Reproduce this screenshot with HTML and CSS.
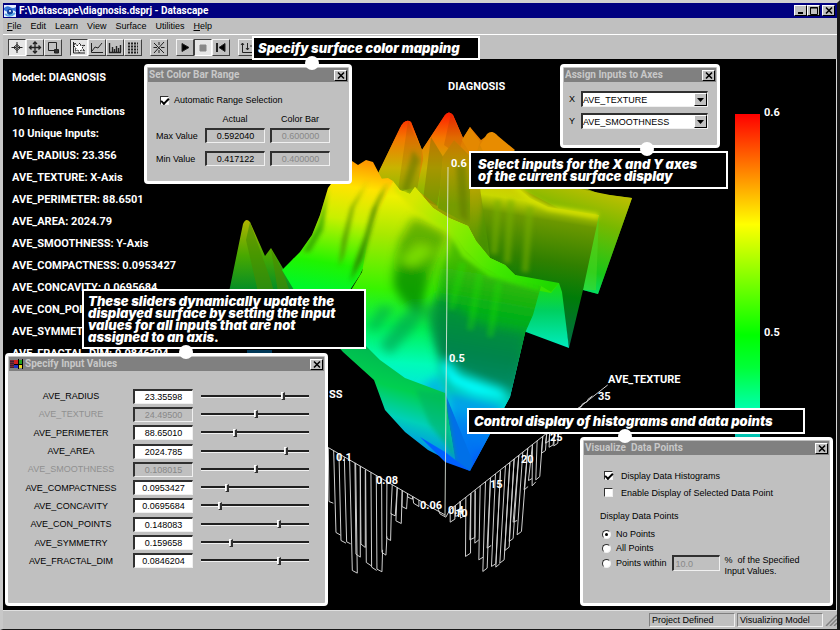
FILE: index.html
```html
<!DOCTYPE html>
<html lang="en">
<head>
<meta charset="utf-8">
<title>F:\Datascape\diagnosis.dsprj - Datascape</title>
<link rel="stylesheet" href="styles.css">
</head>
<body>
<div class="app">
  <header class="titlebar">
    <svg class="app-icon" viewBox="0 0 12 12" aria-hidden="true"><rect width="12" height="12" fill="#e8f0ff"/><path d="M0 3Q3 0 6 2T12 2V7Q9 4 6 6T0 5Z" fill="#3878d8"/><circle cx="6" cy="7" r="3" fill="#1040a0"/><path d="M1 9Q6 13 11 8" stroke="#58a8e8" stroke-width="2" fill="none"/><circle cx="6" cy="6" r="1" fill="#fff"/></svg>
    <h1>F:\Datascape\diagnosis.dsprj - Datascape</h1>
    <div class="window-buttons">
      <button class="caption" aria-label="Minimize"><svg viewBox="0 0 10 9"><path d="M2 7H7" stroke="#000" stroke-width="2"/></svg></button>
      <button class="caption" aria-label="Maximize"><svg viewBox="0 0 10 9"><path d="M1.500 1.500H8.500V8.500H1.500ZM1 2H9" stroke="#000" fill="none"/></svg></button>
      <button class="caption spaced" aria-label="Close"><svg viewBox="0 0 10 9"><path d="M2 1.500L8 7.500M8 1.500L2 7.500" stroke="#000" stroke-width="1.600"/></svg></button>
    </div>
  </header>
  <nav class="menubar">
    <a href="#"><u>F</u>ile</a><a href="#">Edit</a><a href="#">Learn</a><a href="#">View</a><a href="#">Surface</a><a href="#">Utilities</a><a href="#"><u>H</u>elp</a>
  </nav>
  <div class="toolbar" role="toolbar">
    <div class="tool-group">
      <button class="tool pressed" aria-label="Rotate"><svg viewBox="0 0 14 13"><path d="M7 1V12M1.500 6.500H12.500M3.500 6.500L7 3.500L10.500 6.500L7 9.500Z" /><circle cx="7" cy="6.500" r="1" fill="#e6e6e6"/></svg></button>
      <button class="tool" aria-label="Move"><svg viewBox="0 0 14 13"><path d="M7 1V12M1.500 6.500H12.500M5 3L7 1L9 3M5 10L7 12L9 10M3.500 4.500L1.500 6.500L3.500 8.500M10.500 4.500L12.500 6.500L10.500 8.500" stroke-width="1.300"/></svg></button>
      <button class="tool" aria-label="Zoom"><svg viewBox="0 0 14 13"><path d="M2.500 1.500H10.500V9.500H2.500Z"/><path d="M8.500 8.500H12.500V12H8.500Z" fill="#333"/></svg></button>
    </div>
    <div class="tool-group">
      <button class="tool pressed" aria-label="Surface plot"><svg viewBox="0 0 14 13"><path d="M1.500 1V12H13" /><path d="M3 2L5 5L8 2L9 5L13 4L10 7L13 10L9 9L7 12L6 9L3 10L4 7L2 5Z" fill="#fff" stroke-dasharray="2 1"/></svg></button>
      <button class="tool" aria-label="Line plot"><svg viewBox="0 0 14 13"><path d="M1.500 2V11.500H13M2 10L5 6L8 7L12 2"/></svg></button>
      <button class="tool" aria-label="Histogram"><svg viewBox="0 0 14 13"><path d="M1.500 2V11.500H13M4.500 11V6M6.500 11V8M8.500 11V5M10.500 11V7M12.500 11V4" stroke-width="1.400"/></svg></button>
      <button class="tool" aria-label="Table"><svg viewBox="0 0 14 13"><path d="M2 2.500H12M2 5.500H12M2 8.500H12M2 11.500H12" stroke-dasharray="2 1" stroke-width="2"/></svg></button>
    </div>
    <div class="tool-group">
      <button class="tool" aria-label="Train"><svg viewBox="0 0 14 13"><path d="M2 2L12 12M12 1L2 12M7 1V4M7 9V12M1.500 6.500H5M9 6.500H12.500"/></svg></button>
    </div>
    <div class="tool-group">
      <button class="tool" aria-label="Play"><svg viewBox="0 0 14 13"><path d="M4 2.500L11 6.500L4 10.500Z" fill="#000"/></svg></button>
      <button class="tool pressed" aria-label="Stop"><svg viewBox="0 0 14 13"><path d="M4 4H10V10H4Z" class="muted"/></svg></button>
      <button class="tool" aria-label="Rewind"><svg viewBox="0 0 14 13"><path d="M3 2V11" stroke-width="2"/><path d="M11 2.500V10.500L5 6.500Z" fill="#000"/></svg></button>
    </div>
    <div class="tool-group">
      <button class="tool" aria-label="Axes"><svg viewBox="0 0 14 13"><path d="M2.500 2V11.500H13M1 4L2.500 2L4 4M7.500 2V9M6 7L7.500 9L9 7M10 5H12"/></svg></button>
    </div>
  </div>

  <main class="workspace">
    <svg class="scene" viewBox="3 59 832 550" width="832" height="550" role="img" aria-label="DIAGNOSIS response surface">
      <defs>
        <linearGradient id="bar" x2="0" y2="1"><stop offset="0" stop-color="#f00"/><stop offset=".15" stop-color="#ff7000"/><stop offset=".34" stop-color="#ff0"/><stop offset=".68" stop-color="#0f0"/><stop offset=".78" stop-color="#00ff38"/><stop offset=".92" stop-color="#00ffb8"/><stop offset="1" stop-color="#00b8b0"/></linearGradient>
        <linearGradient id="back" gradientUnits="userSpaceOnUse" x1="440" y1="112" x2="480" y2="310"><stop offset="0" stop-color="#f01c00"/><stop offset=".12" stop-color="#e87000"/><stop offset=".35" stop-color="#c8a800"/><stop offset=".6" stop-color="#6c9c00"/><stop offset=".85" stop-color="#188c00"/><stop offset="1" stop-color="#008020"/></linearGradient>
        <linearGradient id="peak" gradientUnits="userSpaceOnUse" x1="0" y1="112" x2="0" y2="205"><stop offset="0" stop-color="#ff1800"/><stop offset=".28" stop-color="#f47800"/><stop offset=".6" stop-color="#c8b400"/><stop offset="1" stop-color="#70b800"/></linearGradient>
        <linearGradient id="tail" gradientUnits="userSpaceOnUse" x1="620" y1="190" x2="590" y2="294"><stop offset="0" stop-color="#c8c000"/><stop offset=".35" stop-color="#78b800"/><stop offset=".8" stop-color="#18c818"/><stop offset="1" stop-color="#00e068"/></linearGradient>
        <linearGradient id="mid" gradientUnits="userSpaceOnUse" x1="560" y1="190" x2="535" y2="348"><stop offset="0" stop-color="#d0c800"/><stop offset=".1" stop-color="#c8d800"/><stop offset=".2" stop-color="#6c9800"/><stop offset=".45" stop-color="#308000"/><stop offset=".65" stop-color="#007c08"/><stop offset="1" stop-color="#006c50"/></linearGradient>
        <linearGradient id="fold" gradientUnits="userSpaceOnUse" x1="0" y1="280" x2="0" y2="348"><stop offset="0" stop-color="#20e000"/><stop offset=".45" stop-color="#00d060"/><stop offset="1" stop-color="#00ecc0"/></linearGradient>
        <linearGradient id="front" gradientUnits="userSpaceOnUse" x1="390" y1="175" x2="370" y2="475"><stop offset="0" stop-color="#f8d000"/><stop offset=".07" stop-color="#f0f000"/><stop offset=".2" stop-color="#a8e800"/><stop offset=".38" stop-color="#38f400"/><stop offset=".5" stop-color="#00f050"/><stop offset=".62" stop-color="#00fcb8"/><stop offset=".74" stop-color="#00e0e8"/><stop offset="1" stop-color="#0050f8"/></linearGradient>
        <linearGradient id="crest" gradientUnits="userSpaceOnUse" x1="350" y1="160" x2="330" y2="290"><stop offset="0" stop-color="#ff9800"/><stop offset=".2" stop-color="#ffe400"/><stop offset=".45" stop-color="#c8f000"/><stop offset=".8" stop-color="#20f400"/><stop offset="1" stop-color="#00f828"/></linearGradient>
        <linearGradient id="rim" gradientUnits="userSpaceOnUse" x1="420" y1="190" x2="545" y2="290"><stop offset="0" stop-color="#d8e800"/><stop offset=".35" stop-color="#88ec00"/><stop offset=".7" stop-color="#40e800"/><stop offset="1" stop-color="#20d800"/></linearGradient>
        <linearGradient id="cliff" gradientUnits="userSpaceOnUse" x1="510" y1="265" x2="475" y2="470"><stop offset="0" stop-color="#48bc00"/><stop offset=".25" stop-color="#00b018"/><stop offset=".45" stop-color="#009048"/><stop offset=".6" stop-color="#00a080"/><stop offset=".7" stop-color="#00f0e0"/><stop offset=".8" stop-color="#0090f0"/><stop offset="1" stop-color="#0040ff"/></linearGradient>
        <linearGradient id="under" gradientUnits="userSpaceOnUse" x1="400" y1="355" x2="375" y2="445"><stop offset="0" stop-color="#00b850"/><stop offset=".35" stop-color="#00d050"/><stop offset=".65" stop-color="#00d0b8"/><stop offset="1" stop-color="#0080f8"/></linearGradient>
        <linearGradient id="spike" gradientUnits="userSpaceOnUse" x1="0" y1="219" x2="0" y2="292"><stop offset="0" stop-color="#b4b400"/><stop offset=".5" stop-color="#48a800"/><stop offset="1" stop-color="#008c28"/></linearGradient>
        <filter id="soft" x="-20%" y="-20%" width="140%" height="140%"><feGaussianBlur stdDeviation="5"/></filter>
        <filter id="smooth" x="-20%" y="-20%" width="140%" height="140%"><feGaussianBlur stdDeviation="2"/></filter>
        <clipPath id="front-clip"><path d="M270 290L300 252L312 235L320 215L328 188L352 162L373 162L384 183L393 181L400 192L415 187L433 208L468 226L476 241L490 258L505 265L515 275L541 286L533 315L525 333L510 397L470 471L445 462L365 345Z"/></clipPath>
      </defs>

      <path d="M370 190L400 128Q405 118 411 122L422 150L445 115Q449 110 453 115L463 138L470 127L481 140L492 132L510 148L560 178L600 194L632 198L598 294L583 290L520 310L440 260Z" fill="url(#back)"/>
      <path d="M370 190L400 128Q405 118 411 122L422 150L418 188L400 205Z" fill="url(#peak)"/>
      <path d="M408 121L422 150L418 188L398 190Z" fill="#805000" opacity=".2"/>
      <path d="M422 150L445 115Q449 110 453 115L463 138L455 165L425 170Z" fill="url(#peak)"/>
      <path d="M451 113L463 138L458 155L444 145Z" fill="#903800" opacity=".2"/>
      <path d="M417 190L425 150L431 137L437 144L445 160L438 206Z" fill="url(#peak)"/>
      <path d="M431 137L445 160L437 206L423 200Z" fill="#7c7000" opacity=".45"/>
      <path d="M438 208L443 156L454 140L470 156V225Z" fill="url(#peak)"/>
      <path d="M438 208L443 156L454 140L470 156V225Z" fill="#806800" opacity=".35"/>
      <path d="M462 140L470 127L480 142L474 160Z" fill="#e48800"/>
      <path d="M480 145L487 134Q492 129 498 136L515 150L490 165Z" fill="#e88c00"/>
      <g filter="url(#smooth)" opacity=".55">
        <path d="M413 150L402 190L408 193L420 160ZM456 165L460 216L468 222L466 165Z" fill="#607800"/>
        <path d="M485 188L478 242L487 252L496 188ZM511 190L502 260L508 266L519 196Z" fill="#408c00"/>
        <path d="M500 188L492 256L499 260L508 190Z" fill="#a0b800"/>
      </g>
      <path d="M518 187L560 185L610 195L632 198L598 294L583 290L590 225Z" fill="url(#tail)"/>
      <path d="M588 220L599 214L596 290L583 290Z" fill="#50d820" opacity=".5"/>
      <path d="M480 188H518L530 198L548 207L599 215L583 290L569 348L559 283L515 275L490 258Z" fill="url(#mid)"/>
      <path d="M515 186L530 199L549 208L598 216" fill="none" stroke="#d4e000" stroke-width="5" filter="url(#smooth)"/>
      <path d="M498 200L494 254M511 200L507 263M530 207L525 272" stroke="#78b000" stroke-width="7" opacity=".55" filter="url(#smooth)"/>
      <path d="M541 286L559 283L562 292L569 348L526 332L515 320L528 286Z" fill="url(#fold)"/>
      <path d="M530 285L559 283L551 293L530 289Z" fill="#38e400"/>

      <path d="M229 292L243 224Q246 217 250 222L265 256L271 248L284 270L294 258L314 292Z" fill="url(#spike)"/>
      <path d="M250 222L271 281L274 292H258L246 240Z" fill="#488c00" opacity=".6"/>
      <path d="M271 249L282 270L290 292H278Z" fill="#4c8800" opacity=".6"/>
      <path d="M282 270L300 252L312 235L320 215L328 188L345 165L352 161L358 165L366 160L373 162L384 183L388 215L360 275L330 320L300 300Z" fill="url(#crest)"/>
      <path d="M343 258L350 230L356 205L370 180L388 178L393 181L378 230L366 262L340 300L325 290Z" fill="url(#crest)"/>
      <path d="M345 300L362 272L369 235L393 181L400 190L410 194L415 187L433 208L449 218L468 226L476 241L490 258L505 265L515 275L541 286L525 333L510 397L470 471L445 400L400 385L345 345L310 320Z" fill="url(#front)"/>
      <g clip-path="url(#front-clip)">
        <path d="M455 232L475 255L500 270L551 280L543 315L535 333L520 397L514 412L480 481L448 420L443 385L433 320L440 270Z" fill="url(#cliff)" filter="url(#soft)"/>
        <g filter="url(#smooth)">
          <path d="M388 183L378 205L371 230L363 259L350 282L355 262L365 235L372 210L381 193Z" fill="#287000" opacity=".75"/>
          <path d="M368 181L354 207L344 255L339 267L342 240L351 207Z" fill="#488400" opacity=".7"/>
          <path d="M328 188L318 225L303 252L310 252L323 230Z" fill="#30a000" opacity=".8"/>
        </g>
        <g filter="url(#soft)">
          <path d="M413 218L400 240L392 275L400 300L418 315L429 285L440 250L448 235L430 225Z" fill="#187c00" opacity=".5"/>
          <path d="M402 265L392 286L411 307L424 314L425 270Z" fill="#008800" opacity=".5"/>
          <path d="M417 302L400 318L380 345L390 355L424 318Z" fill="#009c50" opacity=".6"/>
          <path d="M380 305L368 328L376 332L395 308Z" fill="#009c50" opacity=".5"/>
          <path d="M424 310L435 345L446 362L484 382L514 390L526 333L480 325L455 305L440 295Z" fill="#007850" opacity=".5"/>
          <path d="M418 245L402 260L411 267L434 250Z" fill="#a0ff00" opacity=".55"/>
          <path d="M439 365L450 385L474 395L509 401L502 390L460 375L446 360Z" fill="#00ffff"/>
          <path d="M448 392L470 396L505 405L473 463L455 455Z" fill="#0078f0" opacity=".6"/>
          <path d="M420 388L440 374L446 410L436 400Z" fill="#0098e8" opacity=".6"/>
        </g>
        <path d="M396 186L415 207L435 221L450 228L465 254L490 273L541 288" fill="none" stroke="url(#rim)" stroke-width="7" filter="url(#smooth)"/>
        <path d="M463 263L451 310M480 272L470 330M499 281L490 337" stroke="#20e800" stroke-width="7" opacity=".3" filter="url(#smooth)"/>
      </g>
      <path d="M400 191L410 194L415 187L433 208L449 218L468 226L476 241L490 258L505 265L515 275L559 283L551 292L541 286L500 276L482 266L465 250L450 227L433 220L415 206Z" fill="url(#rim)"/>
      <path d="M335 343L365 345L380 360L405 378L445 393L448 415L457 465L428 450L405 432L385 410L374 380L343 352Z" fill="url(#under)"/>
      <path d="M445 393L448 415L456 464L470 471L473 462L460 430Z" fill="#0070e8"/>
      <path d="M416 390L445 393L456 464L446 445L430 425Z" fill="#00b060" opacity=".55" filter="url(#smooth)"/>
      <path d="M420 437L445 452L470 471L445 462Z" fill="#0060ff"/>
      <path d="M247 350H272V353H247Z" fill="#003858"/>
      <path d="M448 167L445 516" fill="none" stroke="#e4ece0" stroke-opacity=".85"/>

      <g class="wire" transform="translate(320 360) scale(.333)">
        <path d="M25 263L330 440L375 465M355 448L360 462L378 472M25 263L27 425L40 430M41 272L48 518L62 526M57 281L63 542L78 550M73 291L80 546L92 552M89 300L97 632L112 640L107 309M105 309L108 583L121 592V320M121 318L123 553L136 563V330M137 328L139 608L154 618M153 337L155 622L170 632M169 346L171 628L186 636L188 570M185 355L186 578L198 586L201 530M201 365L200 535L212 542L214 460M217 374L213 462L226 468L232 382M232 382L228 483L244 491L247 391L246 440L260 447L263 400M262 400L264 412L278 418V410M279 410L281 430L297 440V420"/>
        <path d="M378 472L390 450L864 75M391 447V487L405 478V438M407 436V470L420 463V424M422 424V475L437 465M438 412L437 590L452 580L453 400M453 400L450 540L465 533L466 392M466 392L465 550L477 540M481 378L477 600L490 592M497 366L489 635L502 625L512 354M512 354L502 565L514 557M527 342L515 620L528 612L542 332M542 332L528 622L540 612M557 318L540 610L553 600L570 308M570 308L555 572L568 562L583 297M583 297L568 545L580 536L597 286M597 286L580 487L592 482M609 276L592 525L605 515L624 265M624 265L613 390L625 380M638 254L626 362L637 356M638 254L637 378L648 366M652 243L648 360L660 350L669 229M669 229L665 280L677 272L681 220M681 220L677 250L688 243L690 212L688 262L700 255L706 200L702 258L714 250L719 190M770 148L785 140L788 132L802 125L805 118L818 108"/>
      </g>
      <path d="M735 114H760V439H735Z" fill="url(#bar)"/>
      <g class="plot-text">
        <text x="448" y="90">DIAGNOSIS</text>
        <text x="451" y="167">0.6</text><text x="449" y="362">0.5</text>
        <text x="764" y="116">0.6</text><text x="764" y="336">0.5</text>
        <text x="608" y="383">AVE_TEXTURE</text><text x="329" y="398">SS</text>
        <text x="598" y="400">35</text><text x="550" y="441">25</text><text x="521" y="463">20</text><text x="490" y="488">15</text><text x="455" y="517">10</text>
        <text x="336" y="461">0.1</text><text x="376" y="484">0.08</text><text x="420" y="509">0.06</text><text x="448" y="514">0.4</text>
      </g>
    </svg>

    <section class="model">
      <p>Model: DIAGNOSIS</p>
      <ul>
        <li>10 Influence Functions</li><li>10 Unique Inputs:</li><li>AVE_RADIUS: 23.356</li><li>AVE_TEXTURE: X-Axis</li><li>AVE_PERIMETER: 88.6501</li><li>AVE_AREA: 2024.79</li><li>AVE_SMOOTHNESS: Y-Axis</li><li>AVE_COMPACTNESS: 0.0953427</li><li>AVE_CONCAVITY: 0.0695684</li><li>AVE_CON_POINTS: 0.148083</li><li>AVE_SYMMETRY: 0.159658</li><li>AVE_FRACTAL_DIM: 0.0846204</li>
      </ul>
    </section>

    <section class="dialog range-dialog">
      <header><h2>Set Color Bar Range</h2><button class="caption" aria-label="Close"><svg viewBox="0 0 10 9"><path d="M2 1.500L8 7.500M8 1.500L2 7.500" stroke="#000" stroke-width="1.600"/></svg></button></header>
      <div class="range-body">
        <label class="option"><input type="checkbox" checked>Automatic Range Selection</label>
        <div class="range-grid">
          <span></span><span class="head">Actual</span><span class="head">Color Bar</span>
          <label for="max">Max Value</label><input id="max" class="field readonly" value="0.592040" readonly><input class="field readonly" aria-label="Color bar maximum" value="0.600000" disabled>
          <label for="min">Min Value</label><input id="min" class="field readonly" value="0.417122" readonly><input class="field readonly" aria-label="Color bar minimum" value="0.400000" disabled>
        </div>
      </div>
    </section>

    <section class="dialog axes-dialog">
      <header><h2>Assign Inputs to Axes</h2><button class="caption" aria-label="Close"><svg viewBox="0 0 10 9"><path d="M2 1.500L8 7.500M8 1.500L2 7.500" stroke="#000" stroke-width="1.600"/></svg></button></header>
      <div class="axes-body">
        <label for="x-axis">X</label><div class="combo"><select id="x-axis"><option>AVE_TEXTURE</option></select><span class="arrow"><svg viewBox="0 0 9 9"><path d="M1 3H8L4.500 7Z"/></svg></span></div>
        <label for="y-axis">Y</label><div class="combo"><select id="y-axis"><option>AVE_SMOOTHNESS</option></select><span class="arrow"><svg viewBox="0 0 9 9"><path d="M1 3H8L4.500 7Z"/></svg></span></div>
      </div>
    </section>

    <section class="dialog inputs-dialog">
      <header><svg class="flag" viewBox="0 0 13 10" aria-hidden="true"><path d="M0 1H4V9H0" fill="#402030"/><path d="M1 1V9M3 1V9" stroke="#b03040" stroke-dasharray="1 1"/><path d="M4 1H8V5H4Z" fill="#d02020"/><path d="M9 1H12V5H9Z" fill="#20a020"/><path d="M4 6H8V9H4Z" fill="#2030c0"/><path d="M9 6H12V9H9Z" fill="#e8d820"/><path d="M8.500 0V10M4 5.500H13M12.500 0V10" stroke="#000"/></svg><h2>Specify Input Values</h2><button class="caption" aria-label="Close"><svg viewBox="0 0 10 9"><path d="M2 1.500L8 7.500M8 1.500L2 7.500" stroke="#000" stroke-width="1.600"/></svg></button></header>
      <div class="inputs-body">
        <div class="input-row"><label for="i1">AVE_RADIUS</label><input id="i1" class="field" value="23.35598"><input type="range" aria-label="AVE_RADIUS" value="77"></div>
        <div class="input-row off"><label for="i2">AVE_TEXTURE</label><input id="i2" class="field" value="24.49500" disabled><input type="range" aria-label="AVE_TEXTURE" value="51"></div>
        <div class="input-row"><label for="i3">AVE_PERIMETER</label><input id="i3" class="field" value="88.65010"><input type="range" aria-label="AVE_PERIMETER" value="31"></div>
        <div class="input-row"><label for="i4">AVE_AREA</label><input id="i4" class="field" value="2024.785"><input type="range" aria-label="AVE_AREA" value="80"></div>
        <div class="input-row off"><label for="i5">AVE_SMOOTHNESS</label><input id="i5" class="field" value="0.108015" disabled><input type="range" aria-label="AVE_SMOOTHNESS" value="51"></div>
        <div class="input-row"><label for="i6">AVE_COMPACTNESS</label><input id="i6" class="field" value="0.0953427"><input type="range" aria-label="AVE_COMPACTNESS" value="23"></div>
        <div class="input-row"><label for="i7">AVE_CONCAVITY</label><input id="i7" class="field" value="0.0695684"><input type="range" aria-label="AVE_CONCAVITY" value="16"></div>
        <div class="input-row"><label for="i8">AVE_CON_POINTS</label><input id="i8" class="field" value="0.148083"><input type="range" aria-label="AVE_CON_POINTS" value="73"></div>
        <div class="input-row"><label for="i9">AVE_SYMMETRY</label><input id="i9" class="field" value="0.159658"><input type="range" aria-label="AVE_SYMMETRY" value="27"></div>
        <div class="input-row"><label for="i10">AVE_FRACTAL_DIM</label><input id="i10" class="field" value="0.0846204"><input type="range" aria-label="AVE_FRACTAL_DIM" value="73"></div>
      </div>
    </section>

    <section class="dialog points-dialog">
      <header><h2>Visualize&nbsp; Data Points</h2><button class="caption" aria-label="Close"><svg viewBox="0 0 10 9"><path d="M2 1.500L8 7.500M8 1.500L2 7.500" stroke="#000" stroke-width="1.600"/></svg></button></header>
      <div class="points-body">
        <label class="option"><input type="checkbox" checked>Display Data Histograms</label>
        <label class="option"><input type="checkbox">Enable Display of Selected Data Point</label>
        <fieldset>
          <legend>Display Data Points</legend>
          <label class="option"><input type="radio" name="points" checked>No Points</label>
          <label class="option"><input type="radio" name="points">All Points</label>
          <div class="within"><label class="option"><input type="radio" name="points">Points within</label><input class="field" aria-label="Percent" value="10.0" disabled><p>%&nbsp; of the Specified<br>Input Values.</p></div>
        </fieldset>
      </div>
    </section>

    <aside class="callout callout-color">Specify surface color mapping</aside>
    <aside class="callout callout-axes">Select inputs for the X and Y axes<br>of the current surface display</aside>
    <aside class="callout callout-sliders">These sliders dynamically update the<br>displayed surface by setting the input<br>values for all inputs that are not<br>assigned to an axis.</aside>
    <aside class="callout callout-points">Control display of histograms and data points</aside>
    <i class="pin pin-color"></i><i class="pin pin-axes"></i><i class="pin pin-sliders"></i><i class="pin pin-points"></i>
  </main>

  <footer class="statusbar">
    <span class="pane">Project Defined</span><span class="pane">Visualizing Model</span>
    <svg class="grip" viewBox="0 0 12 12" aria-hidden="true"><path d="M1 12L12 1M5 12L12 5M9 12L12 9" stroke="#808080" stroke-width="1.500"/></svg>
  </footer>
</div>
</body>
</html>
```
FILE: styles.css
```css
* { box-sizing: border-box; }

body {
  margin: 0;
  background: #000;
  color: #000;
  font: 9px/12px "Liberation Sans", sans-serif;
}

h1, h2, p, ul, fieldset, legend { margin: 0; padding: 0; border: 0; font-size: inherit; }
ul { list-style: none; }
button, input, select { font: inherit; color: inherit; margin: 0; padding: 0; }

.app {
  height: 100vh;
  display: flex;
  flex-direction: column;
  background: #c0c0c0;
  border: solid;
  border-width: 3px 3px 1px;
  border-color: #d0d0d0 #181818 #181818 #c8c8c8;
}

.titlebar {
  height: 15px;
  display: flex;
  align-items: center;
  gap: 3px;
  padding: 0 2px 0 1px;
  background: #000080;
  color: #fff;
}
.titlebar h1 { flex: 1; font: bold 10px/14px Roboto, sans-serif; }
.app-icon { width: 12px; height: 12px; }
.window-buttons { display: flex; }

.caption {
  width: 13px;
  height: 11px;
  background: #c0c0c0;
  border: 1px solid;
  border-color: #fff #000 #000 #fff;
  display: flex;
  align-items: center;
  justify-content: center;
}
.caption svg { width: 10px; height: 9px; flex: none; }
.spaced { margin-left: 2px; }

.menubar {
  height: 17px;
  display: flex;
  align-items: center;
  gap: 9px;
  padding: 0 4px;
  border-bottom: 1px solid #fff;
}
.menubar a { color: #000; text-decoration: none; }

.toolbar {
  height: 24px;
  display: flex;
  align-items: center;
  gap: 8px;
  padding: 0 5px;
}
.tool-group { display: flex; }
.tool {
  width: 18px;
  height: 17px;
  display: flex;
  align-items: center;
  justify-content: center;
  background: #c0c0c0;
  border: 1px solid;
  border-color: #f4f4f4 #404040 #404040 #f4f4f4;
}
.tool svg { width: 14px; height: 13px; flex: none; fill: none; stroke: #222; }
.tool .muted { fill: #888; stroke: #888; }
.pressed { background: #e6e6e6; border-color: #404040 #fff #fff #404040; }

.workspace {
  position: relative;
  flex: 1;
  min-height: 0;
  background: #000;
  border-right: 1px solid #d8d8d8;
}
.scene { position: absolute; left: 0; top: 0; }
.wire path { fill: none; stroke: #d0d0d0; stroke-width: 3; }
.plot-text { fill: #fff; font: bold 11px Roboto, sans-serif; }

.model {
  padding: 8px 9px;
  position: relative;
  color: #fff;
  font: bold 11px/22px Roboto, sans-serif;
}
.model ul { margin-top: 12px; }

.dialog {
  position: absolute;
  display: flex;
  flex-direction: column;
  background: #c0c0c0;
  border: 3px solid #fff;
  border-radius: 4px;
}
.dialog header {
  height: 14px;
  margin: 1px 1px 0;
  padding: 0 1px;
  display: flex;
  align-items: center;
  gap: 2px;
  background: #808080;
  color: #c8c8c8;
}
.dialog h2 { flex: 1; font: bold 10px/14px Roboto, sans-serif; }
.flag { width: 13px; height: 10px; }

.range-dialog { left: 141px; top: 5px; width: 208px; height: 120px; }
.axes-dialog { left: 557px; top: 5px; width: 160px; height: 84px; }
.inputs-dialog { left: 2px; top: 294px; width: 323px; height: 253px; }
.points-dialog { left: 577px; top: 378px; width: 253px; height: 169px; }

.field {
  width: 60px;
  height: 15px;
  padding: 0 2px;
  text-align: center;
  background: #fff;
  border: 1px solid;
  border-width: 2px 1px 1px 2px;
  border-color: #303030 #f0f0f0 #f0f0f0 #303030;
  border-radius: 0;
}
.readonly, .field:disabled { background: #c0c0c0; }
.field:disabled { color: #888; }

.option { display: flex; align-items: center; gap: 5px; }
input[type="checkbox"], input[type="radio"] {
  appearance: none;
  width: 9px;
  height: 9px;
  background: #fff;
  border: 1px solid;
  border-color: #303030 #f0f0f0 #f0f0f0 #303030;
  display: grid;
  place-items: center;
}
input[type="radio"] { border-radius: 50%; }
input[type="checkbox"]:checked::before {
  content: "";
  width: 6px;
  height: 3px;
  border: solid #000;
  border-width: 0 0 2px 2px;
  transform: rotate(-45deg);
}
input[type="radio"]:checked::before {
  content: "";
  width: 3px;
  height: 3px;
  border-radius: 50%;
  background: #000;
}

.range-body { padding: 12px 9px 0; }
.range-grid {
  display: grid;
  grid-template-columns: 44px 60px 60px;
  column-gap: 5px;
  row-gap: 8px;
  align-items: center;
  margin-top: 7px;
  white-space: nowrap;
}
.range-grid .head { text-align: center; margin-bottom: -5px; }
.range-body .option { margin-left: 4px; }

.axes-body {
  display: grid;
  grid-template-columns: 8px 1fr;
  gap: 6px 4px;
  align-items: center;
  padding: 9px 9px 0 6px;
}
.combo {
  height: 16px;
  display: flex;
  background: #fff;
  border: solid;
  border-width: 2px 1px 1px 2px;
  border-color: #303030 #f0f0f0 #f0f0f0 #303030;
}
.combo select {
  appearance: none;
  flex: 1;
  min-width: 0;
  border: 0;
  background: transparent;
}
.arrow {
  width: 13px;
  display: grid;
  place-items: center;
  background: #c0c0c0;
  border: 1px solid;
  border-color: #fff #000 #000 #fff;
}
.arrow svg { width: 9px; height: 9px; }

.inputs-body {
  flex: 1;
  display: grid;
  grid-auto-rows: 1fr;
  padding: 16px 16px 33px 15px;
}
.input-row {
  display: grid;
  grid-template-columns: 102px 60px 1fr;
  column-gap: 8px;
  align-items: center;
}
.input-row label { padding-right: 6px; text-align: center; }
.off label { color: #909090; }
input[type="range"] {
  appearance: none;
  width: 100%;
  height: 9px;
  background: linear-gradient(#202020 0 2px, #f0f0f0 2px 3px) center / 100% 3px no-repeat;
}
input[type="range"]::-webkit-slider-thumb {
  appearance: none;
  width: 4px;
  height: 8px;
  background: #d8d8d8;
  border: solid;
  border-width: 1px 2px 1px 1px;
  border-color: #fff #303030 #303030 #fff;
}

.points-body { padding: 12px 17px 0; }
.points-body > .option { height: 17px; margin-left: 4px; gap: 8px; }
fieldset { margin-top: 7px; min-width: 0; }
legend { margin-bottom: 3px; line-height: 16px; }
fieldset .option { height: 14px; margin-left: 2px; }
.within { display: flex; align-items: flex-start; gap: 5px; }
.within .option { height: 16px; }
.within .field { width: 48px; height: 16px; text-align: left; }
.within p { line-height: 11px; }

.callout {
  position: absolute;
  z-index: 1;
  padding: 4px;
  background: #000;
  border: 2px solid #fff;
  color: #fff;
  font: italic 900 13px/12px Inter, sans-serif;
  white-space: nowrap;
}
.callout-color { left: 249px; top: -23px; width: 228px; }
.callout-axes { left: 466px; top: 92px; width: 259px; padding: 5px 7px; }
.callout-sliders { left: 79px; top: 230px; width: 284px; }
.callout-points { left: 464px; top: 349px; width: 338px; padding: 5px; }

.pin {
  position: absolute;
  z-index: 2;
  width: 14px;
  height: 14px;
  border-radius: 50%;
  background: #fff;
}
.pin-color { left: 302px; top: -3px; }
.pin-axes { left: 637px; top: 83px; }
.pin-sliders { left: 176px; top: 286px; }
.pin-points { left: 615px; top: 370px; }

.statusbar {
  height: 19px;
  display: flex;
  align-items: center;
  justify-content: flex-end;
  gap: 2px;
  border-top: 1px solid #e0e0e0;
}
.pane {
  width: 86px;
  height: 14px;
  padding: 0 2px;
  border: 1px solid;
  border-color: #808080 #f0f0f0 #f0f0f0 #808080;
}
.grip { width: 12px; height: 12px; }
```
